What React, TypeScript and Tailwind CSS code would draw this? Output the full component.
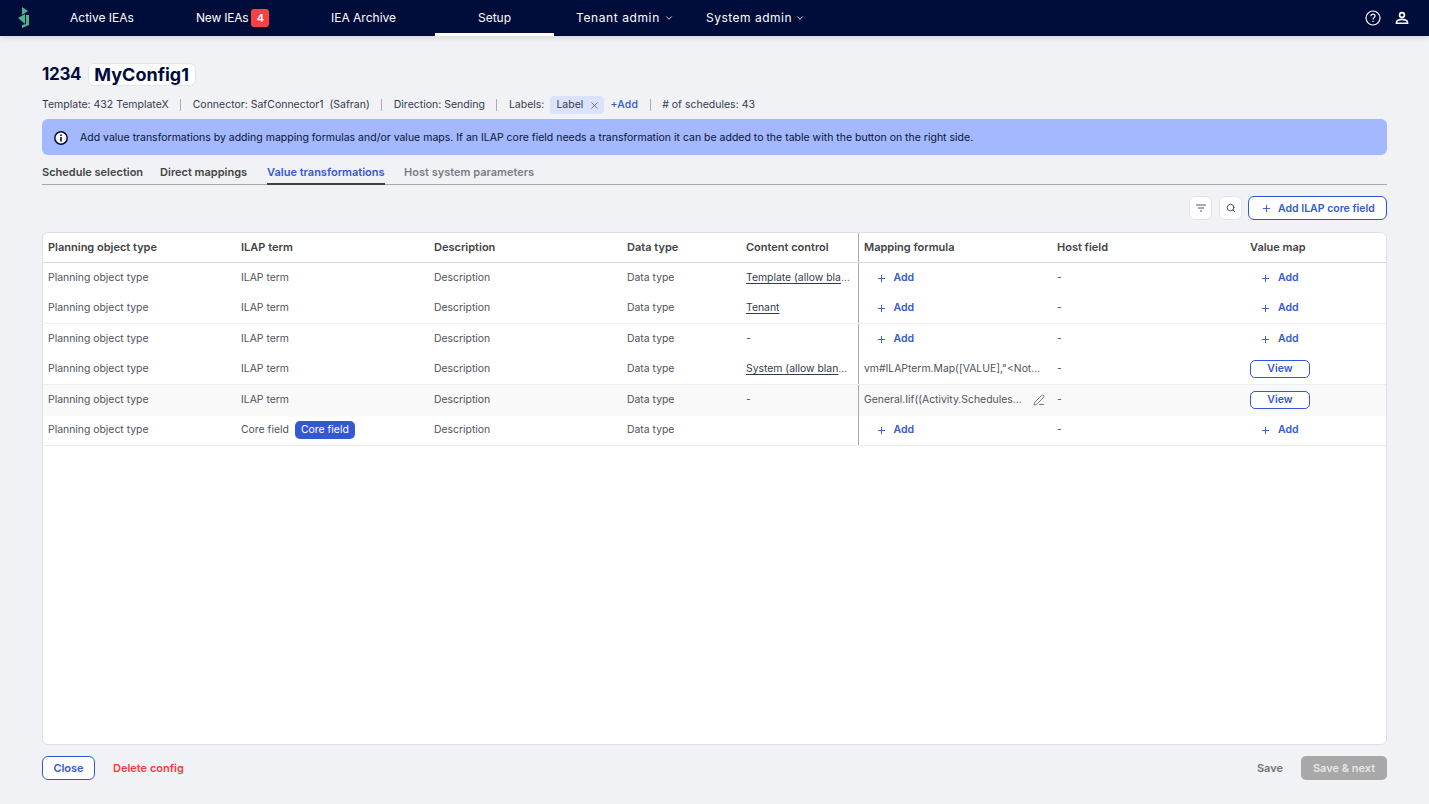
import React from "react";
import { ChevronDown, PenLine, Plus, Search, X } from "lucide-react";

const gridCols = "grid grid-cols-[193px_193px_193px_119px_117px_194px_193px_1fr]";

const Logo = () => (
  <svg width="12" height="22" viewBox="0 0 12 22" className="fill-[#4fb08f]">
    <polygon points="4,0 10,4 4,8" />
    <polygon points="0,11 7,7 7,17" />
    <polygon points="8,8 11,8 11,18 4,21 4,18 8,17" />
  </svg>
);

const UserIcon = () => (
  <svg width="14" height="14" viewBox="0 0 14 14" fill="none" stroke="white" strokeWidth="1.6">
    <circle cx="7" cy="4" r="2.4" />
    <path d="M1.500 12.300V11c0-1.600 3.400-2.600 5.500-2.600s5.500 1 5.500 2.600v1.300z" />
  </svg>
);

const HelpIcon = () => (
  <svg width="16" height="16" viewBox="0 0 16 16" fill="none" stroke="white" strokeWidth="1.2">
    <circle cx="8" cy="8" r="7" />
    <path d="M5.900 6.200c0-1.200 1-2 2.100-2s2.100.8 2.100 1.900c0 1.500-2.100 1.600-2.100 3.300" />
    <path d="M8 10.700v1.300" />
  </svg>
);

const InfoIcon = () => (
  <svg width="14" height="14" viewBox="0 0 14 14">
    <circle cx="7" cy="7" r="6.200" fill="white" stroke="#000d3b" strokeWidth="1.500" />
    <rect x="6.200" y="6" width="1.600" height="4.500" fill="#000d3b" />
    <rect x="6.200" y="3.400" width="1.600" height="1.600" fill="#000d3b" />
  </svg>
);

const FilterIcon = () => (
  <svg width="10" height="8" viewBox="0 0 10 8" stroke="#555" strokeWidth="1" fill="none">
    <path d="M0 1h10M2 4h6M4 7h2" />
  </svg>
);

const Sep = () => <span className="w-px h-[12px] bg-[#a9adb8]" />;

const AddBtn = () => (
  <span className="flex items-center text-[#3358d4] font-semibold text-[10.5px] pl-[11.5px]">
    <Plus size={11} strokeWidth={2} />
    <span className="ml-[7px]">Add</span>
  </span>
);

const MapAddBtn = () => (
  <span className="flex items-center text-[#3358d4] font-semibold text-[10.5px] pl-[10px]">
    <Plus size={11} strokeWidth={2} />
    <span className="ml-[7px]">Add</span>
  </span>
);

const ViewBtn = () => (
  <span className="flex items-center justify-center w-[60px] h-[18px] rounded-[5px] border border-[#3358d4] bg-white text-[#3358d4] font-semibold text-[10.5px]">
    View
  </span>
);

const Link = ({ text, more }: { text: string; more?: boolean }) => (
  <span className="whitespace-nowrap">
    <span className="underline underline-offset-2 text-[#333a4a]">{text}</span>
    {more ? "..." : ""}
  </span>
);

type RowData = {
  term: React.ReactNode;
  control: React.ReactNode;
  formula: React.ReactNode;
  map: React.ReactNode;
  line?: boolean;
  hover?: boolean;
};

const rows: RowData[] = [
  { term: "ILAP term", control: <Link text="Template (allow bla" more />, formula: <AddBtn />, map: <MapAddBtn /> },
  { term: "ILAP term", control: <Link text="Tenant" />, formula: <AddBtn />, map: <MapAddBtn />, line: true },
  { term: "ILAP term", control: "-", formula: <AddBtn />, map: <MapAddBtn /> },
  {
    term: "ILAP term",
    control: <Link text="System (allow blan" more />,
    formula: <span className="whitespace-nowrap">vm#ILAPterm.Map([VALUE],"&lt;Not...</span>,
    map: <ViewBtn />,
    line: true,
  },
  {
    term: "ILAP term",
    control: "-",
    formula: (
      <span className="flex items-center whitespace-nowrap">
        General.Iif((Activity.Schedules...
        <PenLine size={12} strokeWidth={1.6} className="ml-[11px] text-[#555]" />
      </span>
    ),
    map: <ViewBtn />,
    hover: true,
  },
  {
    term: (
      <span className="flex items-center">
        Core field
        <span className="ml-[6px] w-[60px] h-[18px] flex items-center justify-center rounded-[5px] bg-[#3358d4] text-white">
          Core field
        </span>
      </span>
    ),
    control: "",
    formula: <AddBtn />,
    map: <MapAddBtn />,
    line: true,
  },
];

const headers = [
  "Planning object type",
  "ILAP term",
  "Description",
  "Data type",
  "Content control",
  "Mapping formula",
  "Host field",
  "Value map",
];

const Cell = ({ children, divider }: { children?: React.ReactNode; divider?: boolean }) => (
  <div className={`flex items-center pl-[5px] min-w-0 ${divider ? "border-l border-[#a9a9a9]" : ""}`}>{children}</div>
);

export default function App() {
  return (
    <div
      className="h-screen w-full flex flex-col bg-[#f1f2f6] text-[#333a4a] text-[10.4px] overflow-hidden"
      style={{ fontFamily: "Inter, 'Noto Sans', sans-serif" }}
    >
      <header className="h-[36px] shrink-0 flex items-center bg-[#000d3b] text-white text-[12px] shadow-[0_1px_6px_rgba(0,0,0,0.15)]">
        <div className="w-[70px] pl-[18px] flex items-center">
          <Logo />
        </div>
        <div className="w-[126px]">Active IEAs</div>
        <div className="w-[135px] flex items-center">
          <span className="tracking-[-0.2px]">New IEAs</span>
          <span className="ml-[3px] w-[18px] h-[18px] rounded-[3px] bg-[#f94144] flex items-center justify-center font-semibold text-[11px]">
            4
          </span>
        </div>
        <div className="w-[104px]">IEA Archive</div>
        <div className="w-[119px] h-full flex items-center justify-center border-b-[3px] border-white pt-[3px]">Setup</div>
        <div className="ml-[22px] w-[130px] flex items-center tracking-[0.6px]">
          Tenant admin
          <ChevronDown size={10} strokeWidth={2} className="ml-[4px]" />
        </div>
        <div className="flex items-center tracking-[0.5px]">
          System admin
          <ChevronDown size={10} strokeWidth={2} className="ml-[3px]" />
        </div>
        <div className="ml-auto flex items-center gap-[14px] pr-[20px]">
          <HelpIcon />
          <UserIcon />
        </div>
      </header>

      <main className="flex-1 flex flex-col min-h-0 px-[42px] pt-[27px] pb-[24px]">
        <div className="flex items-center h-[23px] text-[#000d3b] font-bold text-[18px]">
          <span className="text-[17px] tracking-[-0.3px]">1234</span>
          <span className="ml-[7px] h-[23px] flex items-center pl-[5px] pr-[6px] bg-white border border-[#e4e5ea] rounded-[6px]">
            MyConfig1
          </span>
        </div>

        <div className="mt-[10px] h-[18px] flex items-center gap-[11.5px] whitespace-nowrap text-[10.5px]">
          <span>Template: 432 TemplateX</span>
          <Sep />
          <span>Connector: SafConnector1&nbsp; (Safran)</span>
          <Sep />
          <span>Direction: Sending</span>
          <Sep />
          <span className="flex items-center">
            Labels:
            <span className="ml-[6px] h-[18px] w-[54px] flex items-center pl-[6px] rounded-[4px] bg-[#dbe2fb]">
              Label
              <X size={11} strokeWidth={1.4} className="ml-[6px]" />
            </span>
            <span className="ml-[6px] text-[#3358d4] font-medium tracking-[0.2px]">+Add</span>
          </span>
          <Sep />
          <span># of schedules: 43</span>
        </div>

        <div className="mt-[5px] h-[36px] shrink-0 flex items-center pl-[12px] pt-[1px] rounded-[6px] bg-[#a3b8ff] text-[#0b1430] text-[10.5px]">
          <InfoIcon />
          <span className="ml-[12px] whitespace-nowrap">
            Add value transformations by adding mapping formulas and/or value maps. If an ILAP core field needs a
            transformation it can be added to the table with the button on the right side.
          </span>
        </div>

        <div className="mt-[8px] h-[22px] shrink-0 flex items-stretch gap-[18px] border-b border-[#a9a9a9] font-semibold whitespace-nowrap text-[11px] text-[#444]">
          <span className="flex items-center pb-[2px]">Schedule selection</span>
          <span className="flex items-center pb-[2px] -ml-[1px]">Direct mappings</span>
          <span className="flex items-center ml-[2px] text-[#3358d4] border-b-2 border-[#3d3f45] -mb-px pb-[1px]">
            Value transformations
          </span>
          <span className="flex items-center ml-[1.5px] text-[#7a7d85] pb-[2px]">Host system parameters</span>
        </div>

        <div className="mt-[11px] h-[24px] shrink-0 flex justify-end items-center gap-[7px]">
          <span className="w-[23px] h-[24px] flex items-center justify-center bg-white border border-[#e4e5ea] rounded-[6px]">
            <FilterIcon />
          </span>
          <span className="w-[23px] h-[24px] flex items-center justify-center bg-white border border-[#e4e5ea] rounded-[6px] mr-[-1px]">
            <Search size={10} strokeWidth={2} className="text-[#333]" />
          </span>
          <span className="w-[139px] h-[24px] flex items-center pl-[12px] pt-[1px] bg-white border border-[#3358d4] rounded-[6px] text-[#3358d4] font-semibold text-[10.5px]">
            <Plus size={11} strokeWidth={2} />
            <span className="ml-[6px]">Add ILAP core field</span>
          </span>
        </div>

        <div className="mt-[11.5px] flex-1 min-h-0 bg-white border border-[#dfe0e4] rounded-[6px] overflow-hidden">
          <div className={`${gridCols} h-[30.5px] border-b border-[#d9d9d9] font-semibold text-[11px] text-[#444]`}>
            {headers.map((h, i) => (
              <Cell key={h} divider={i === 5}>
                {h}
              </Cell>
            ))}
          </div>
          {rows.map((r, i) => (
            <div
              key={i}
              className={`${gridCols} h-[30.5px] text-[#50535a] ${r.line ? "border-b border-[#eeeeee]" : ""} ${r.hover ? "bg-[#f9f9f9]" : ""}`}
            >
              <Cell>Planning object type</Cell>
              <Cell>{r.term}</Cell>
              <Cell>Description</Cell>
              <Cell>Data type</Cell>
              <Cell>{r.control}</Cell>
              <Cell divider>{r.formula}</Cell>
              <Cell>-</Cell>
              <Cell>{r.map}</Cell>
            </div>
          ))}
        </div>

        <div className="mt-[11.5px] h-[24px] shrink-0 flex items-center font-semibold text-[11px]">
          <span className="w-[53px] h-[24px] flex items-center justify-center bg-white border border-[#3358d4] rounded-[6px] text-[#3358d4]">
            Close
          </span>
          <span className="ml-[18px] text-[#f93a3f]">Delete config</span>
          <span className="ml-auto text-[#6f7278]">Save</span>
          <span className="ml-[18px] w-[86px] h-[24px] flex items-center justify-center rounded-[5px] bg-[#a8a8a8] text-[#e6e6e6]">
            Save &amp; next
          </span>
        </div>
      </main>
    </div>
  );
}
